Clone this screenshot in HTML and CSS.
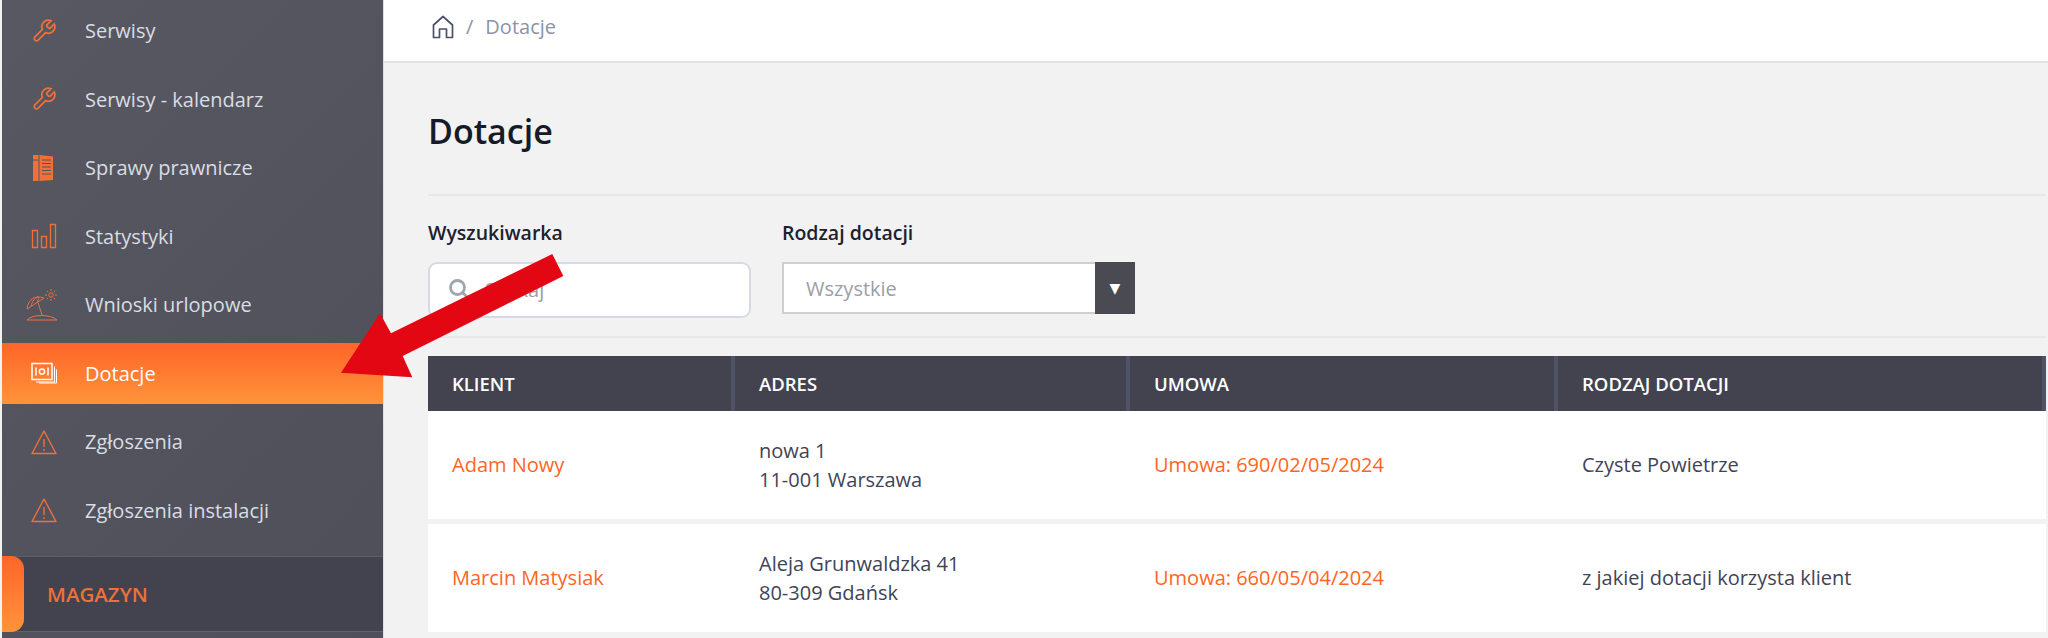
FILE: index.html
```html
<!DOCTYPE html>
<html lang="pl">
<head>
    <meta charset="UTF-8">
    <meta name="viewport" content="width=device-width, initial-scale=1.0">
    <title>Dotacje</title>
    <link rel="stylesheet" href="styles.css">
</head>
<body>
    <svg class="icon-defs" width="0" height="0">
        <symbol id="ico-wrench" viewBox="0 0 24 24">
            <path d="M14.7 6.3a1 1 0 0 0 0 1.4l1.6 1.6a1 1 0 0 0 1.4 0l3.77-3.77a6 6 0 0 1-7.94 7.94l-6.91 6.91a2.12 2.12 0 0 1-3-3l6.91-6.91a6 6 0 0 1 7.94-7.94l-3.76 3.76z" fill="none" stroke="currentColor" stroke-width="1.6"/>
        </symbol>
        <symbol id="ico-warning" viewBox="0 0 26 26">
            <path d="M13 2 L25 24.5 H1 Z" fill="none" stroke="currentColor" stroke-width="1.4" stroke-linejoin="round"/>
            <path d="M13 10v8M13 20v2" fill="none" stroke="currentColor" stroke-width="1.4"/>
        </symbol>
    </svg>

    <!-- Sidebar -->
    <aside class="sidebar">
        <nav class="menu">
            <a class="menu-item"><svg class="menu-icon" viewBox="0 0 26 26"><use href="#ico-wrench"/></svg><span>Serwisy</span></a>
            <a class="menu-item"><svg class="menu-icon" viewBox="0 0 26 26"><use href="#ico-wrench"/></svg><span>Serwisy - kalendarz</span></a>
            <a class="menu-item">
                <svg class="menu-icon" viewBox="0 0 26 26">
                    <path d="M2 0h5.500v26H2z M8.500 0 L22 1.500V25L8.500 26Z" fill="currentColor"/>
                    <path d="M2 5h5.500M11 5h9M11 8.500h9M11 12h9M11 15.500h9M11 19h9" stroke="#55555f" stroke-width="1" fill="none"/>
                </svg>
                <span>Sprawy prawnicze</span>
            </a>
            <a class="menu-item">
                <svg class="menu-icon" viewBox="0 0 26 26">
                    <path d="M1.500 7.500h5v17h-5zM10.500 13.500h5v11h-5zM19.500 1.500h5v23h-5z" fill="none" stroke="currentColor" stroke-width="1.300"/>
                </svg>
                <span>Statystyki</span>
            </a>
            <a class="menu-item">
                <svg class="menu-icon menu-icon-wide" viewBox="0 0 32 32">
                    <path d="M1 20 C2 10 9 6 18 9 L1 20Z M5 17.500 C6 12 9 9 12 7.500 M11 14 C12 11 13 9.500 12 7.500 M12 13.500 L16 26" fill="none" stroke="currentColor" stroke-width="1"/>
                    <path d="M1 31 C6 25 25 25 31 31Z" fill="none" stroke="currentColor" stroke-width="1"/>
                    <circle cx="25" cy="6" r="2.200" fill="none" stroke="currentColor" stroke-width="1"/>
                    <path d="M25 0v2M25 10v2M19 6h2M29 6h2M20.800 1.800l1.400 1.400M27.800 8.800l1.400 1.400M20.800 10.200l1.400-1.400M27.800 3.200l1.400-1.400" stroke="currentColor" stroke-width="1"/>
                </svg>
                <span>Wnioski urlopowe</span>
            </a>
            <a class="menu-item active">
                <svg class="menu-icon" viewBox="0 0 26 21">
                    <path d="M1 1h20v16H1z" fill="none" stroke="currentColor" stroke-width="1.500"/>
                    <path d="M5 5v8M17 5v8" stroke="currentColor" stroke-width="1.500"/>
                    <circle cx="11" cy="9" r="2.600" fill="none" stroke="currentColor" stroke-width="1.500"/>
                    <path d="M23.500 4v15.500H5M25.500 7v13.500H8" fill="none" stroke="currentColor" stroke-width="1"/>
                </svg>
                <span>Dotacje</span>
            </a>
            <a class="menu-item"><svg class="menu-icon" viewBox="0 0 26 26"><use href="#ico-warning"/></svg><span>Zgłoszenia</span></a>
            <a class="menu-item"><svg class="menu-icon" viewBox="0 0 26 26"><use href="#ico-warning"/></svg><span>Zgłoszenia instalacji</span></a>
        </nav>
        <div class="menu-section">MAGAZYN</div>
    </aside>

    <main class="main">
        <div class="topbar">
            <svg class="home-icon" viewBox="0 0 22 24">
                <path d="M1.500 10 L11 1.500 L20.500 10 V22.500 H14.500 V14 H7.500 V22.500 H1.500 Z" fill="none" stroke="#4a5068" stroke-width="1.700" stroke-linejoin="round"/>
            </svg>
            <span class="crumb-sep">/</span>
            <span class="crumb">Dotacje</span>
        </div>

        <div class="content">
            <h1>Dotacje</h1>

            <div class="filters">
                <div class="field">
                    <label for="search">Wyszukiwarka</label>
                    <div class="search-box">
                        <svg class="search-icon" viewBox="0 0 20 20">
                            <circle cx="8.500" cy="8.500" r="7" fill="none" stroke="currentColor" stroke-width="2.800"/>
                            <path d="M13.500 13.500 L19 19" stroke="currentColor" stroke-width="2.800"/>
                        </svg>
                        <input type="text" id="search" placeholder="Szukaj">
                    </div>
                </div>
                <div class="field">
                    <label>Rodzaj dotacji</label>
                    <div class="select-box">
                        <span class="select-value">Wszystkie</span>
                        <span class="select-btn">▼</span>
                    </div>
                </div>
            </div>

            <table class="grants">
                <colgroup>
                    <col class="col-client">
                    <col class="col-address">
                    <col class="col-contract">
                    <col class="col-type">
                </colgroup>
                <thead>
                    <tr>
                        <th>Klient</th>
                        <th>Adres</th>
                        <th>Umowa</th>
                        <th>Rodzaj dotacji</th>
                    </tr>
                </thead>
                <tbody>
                    <tr>
                        <td><a>Adam Nowy</a></td>
                        <td>nowa 1<br>11-001 Warszawa</td>
                        <td><a>Umowa: 690/02/05/2024</a></td>
                        <td>Czyste Powietrze</td>
                    </tr>
                    <tr>
                        <td><a>Marcin Matysiak</a></td>
                        <td>Aleja Grunwaldzka 41<br>80-309 Gdańsk</td>
                        <td><a>Umowa: 660/05/04/2024</a></td>
                        <td>z jakiej dotacji korzysta klient</td>
                    </tr>
                </tbody>
            </table>
        </div>
    </main>

    <!-- Annotation arrow over the screenshot -->
    <svg class="arrow" width="2048" height="638" viewBox="0 0 2048 638">
        <polygon points="341,372.700 380,313.300 391,333.300 552.300,254 563.300,276 402.700,356 412.300,377.300" fill="#e30613"/>
    </svg>
</body>
</html>
```

FILE: styles.css
```css
* {
    box-sizing: border-box;
}

html, body {
    margin: 0;
    height: 638px;
    overflow: hidden;
}

body {
    display: flex;
    position: relative;
    font-family: 'Open Sans', sans-serif;
    font-size: 20px;
    color: #3f4456;
    background-color: #f2f2f2;
}

.icon-defs {
    position: absolute;
}

/* Sidebar */
.sidebar {
    flex: 0 0 382px;
    height: 638px;
    margin-left: 2px;
    background: linear-gradient(135deg, #585862, #4f4f59);
    border-right: 1px solid #dcdfe6;
}

.menu {
    display: flex;
    flex-direction: column;
    gap: 7.5px;
}

.menu-item {
    display: flex;
    align-items: center;
    height: 61px;
    padding-left: 29px;
    color: #d9dde4;
}

.menu-item.active {
    background: linear-gradient(180deg, #ff6529, #ff933a);
    color: #fff;
}

.menu-icon {
    flex: 0 0 26px;
    width: 26px;
    height: 26px;
    margin-right: 28px;
    color: #ef7038;
}

.menu-item.active .menu-icon {
    color: #fff;
}

.menu-icon-wide {
    flex-basis: 32px;
    width: 32px;
    height: 32px;
    margin-left: -5px;
    margin-right: 27px;
}

.menu-section {
    display: flex;
    align-items: center;
    position: relative;
    height: 76px;
    margin-top: 15px;
    padding-left: 45px;
    background-color: #42434f;
    border-top: 1px solid #5f5f69;
    border-bottom: 1px solid #62626c;
    color: #ef7038;
    font-size: 20.5px;
    font-weight: 600;
}

.menu-section::before {
    content: "";
    position: absolute;
    left: 0;
    top: -1px;
    bottom: -1px;
    width: 22px;
    background: linear-gradient(180deg, #ff6529, #ff933a);
    border-radius: 0 13px 13px 0;
}

/* Main */
.main {
    flex: 1;
    min-width: 0;
}

.topbar {
    display: flex;
    align-items: center;
    height: 63px;
    padding-left: 47px;
    padding-bottom: 8px;
    background-color: #fff;
    border-bottom: 2px solid #dde1e8;
}

.home-icon {
    width: 22px;
    height: 24px;
    margin-left: 1px;
}

.crumb-sep {
    margin: 0 12px;
    color: #8c93a5;
}

.crumb {
    color: #8c93a5;
}

.content {
    padding: 0 2px 0 44px;
}

h1 {
    height: 133px;
    margin: 0;
    border-bottom: 2px solid #e8e8e8;
    color: #161b28;
    font-size: 34px;
    font-weight: 600;
    line-height: 136px;
}

.filters {
    display: flex;
    gap: 31px;
    height: 142px;
    padding-top: 22px;
    border-bottom: 2px solid #e8e8e8;
}

.field {
    display: flex;
    flex-direction: column;
}

label {
    height: 44px;
    line-height: 30px;
    color: #1d2130;
    font-size: 19.5px;
    font-weight: 600;
}

.search-box {
    display: flex;
    align-items: center;
    width: 323px;
    height: 56px;
    padding-left: 19px;
    padding-bottom: 2px;
    background-color: #fff;
    border: 2px solid #d6dae2;
    border-radius: 9px;
}

.search-icon {
    flex: 0 0 20px;
    width: 20px;
    height: 20px;
    color: #a1a5ae;
}

.search-box input {
    width: 230px;
    margin-left: 16px;
    padding: 0;
    border: none;
    outline: none;
    font: inherit;
}

.search-box input::placeholder {
    color: #9a9ea8;
}

.select-box {
    display: flex;
    justify-content: space-between;
    width: 353px;
    height: 52px;
    background-color: #fff;
    border: 2px solid #cfcfd2;
    border-right: none;
}

.select-value {
    padding-left: 22px;
    line-height: 50px;
    color: #9a9ea6;
}

.select-btn {
    width: 40px;
    margin: -2px 0;
    background-color: #4a4a52;
    color: #fff;
    font-family: 'DejaVu Sans', sans-serif;
    font-size: 14px;
    line-height: 52px;
    text-align: center;
}

/* Table */
.grants {
    width: 1618px;
    margin-top: 18px;
    table-layout: fixed;
    border-collapse: separate;
    border-spacing: 0;
}

.col-client {
    width: 307px;
}

.col-address {
    width: 395px;
}

.col-contract {
    width: 428px;
}

.col-type {
    width: 488px;
}

th {
    height: 55px;
    padding: 0 24px;
    background-color: #42434f;
    border-right: 4px solid #4f5368;
    color: #fff;
    font-size: 18.5px;
    font-weight: 600;
    text-align: left;
    text-transform: uppercase;
}

td {
    height: 113px;
    padding: 0 24px;
    background-color: #fff;
    background-clip: padding-box;
    border-bottom: 5px solid #f2f2f2;
    line-height: 29.5px;
}

td a {
    color: #ff6524;
}

.arrow {
    position: absolute;
    left: 0;
    top: 0;
    pointer-events: none;
}
```
